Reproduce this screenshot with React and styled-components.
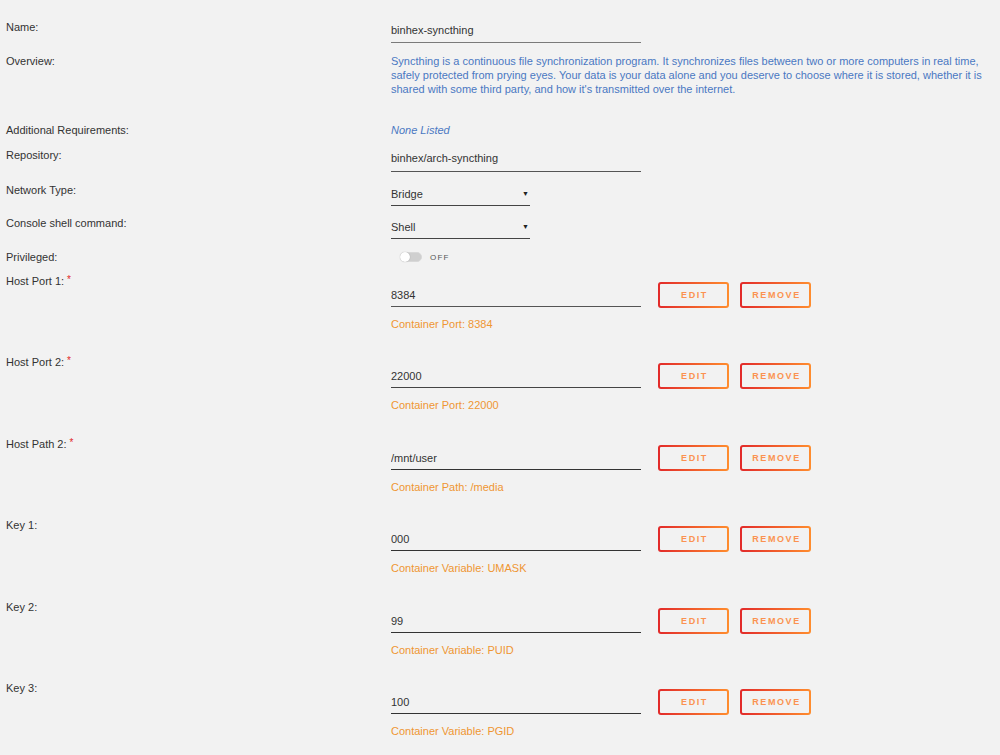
import React from 'react'
import styled, { createGlobalStyle } from 'styled-components'

const GlobalStyle = createGlobalStyle`
  html, body {
    margin: 0;
    padding: 0;
    background: #f2f2f2;
  }
  body {
    font-family: "Liberation Sans", Arial, sans-serif;
    font-size: 11px;
    color: #333;
  }
`;

const Page = styled.div`
  width: 1000px;
  height: 755px;
  overflow: hidden;
  padding: 20px 0 0 6px;
  box-sizing: border-box;
  background: #f2f2f2;
`;

const Row = styled.div`
  display: grid;
  grid-template-columns: 385px 1fr;
  align-items: start;
  margin-top: ${p => p.$gap || 0}px;
`;

const Label = styled.div`
  line-height: 14px;
  color: #333;
  white-space: nowrap;
`;

const Required = styled.span`
  color: #e22828;
  font-size: 10px;
  position: relative;
  top: -2px;
  margin-left: 3px;
`;

const TextInput = styled.input`
  display: block;
  width: 250px;
  box-sizing: border-box;
  margin: ${p => p.$offset || 0}px 0 0;
  padding: 3px 0 ${p => p.$bottom || 4}px;
  height: ${p => 18 + (p.$bottom || 4)}px;
  border: none;
  border-bottom: 1px solid ${p => p.$line || '#3a3a3a'};
  background: transparent;
  font-family: "Liberation Sans", Arial, sans-serif;
  font-size: 11px;
  line-height: 14px;
  color: #333;
  outline: none;
  border-radius: 0;
`;

const Overview = styled.p`
  margin: 0;
  width: 602px;
  line-height: 14px;
  color: #4a78c2;
`;

const Muted = styled.div`
  line-height: 14px;
  color: #4a78c2;
  font-style: italic;
`;

const Select = styled.div`
  display: flex;
  align-items: center;
  justify-content: space-between;
  width: 139px;
  box-sizing: border-box;
  padding: 4px 0 4px;
  line-height: 14px;
  border-bottom: 1px solid #444;
  color: #333;
`;

const Caret = styled.span`
  font-size: 7px;
  color: #222;
  padding-right: 1px;
`;

const ToggleWrap = styled.div`
  display: flex;
  align-items: center;
  gap: 8px;
  padding-left: 9px;
  height: 14px;
`;

const Track = styled.span`
  position: relative;
  display: block;
  width: 22px;
  height: 10px;
  box-sizing: border-box;
  border-radius: 5px;
  background: #cfcfcf;
  border: 1px solid #d8d8d8;
`;

const Knob = styled.span`
  position: absolute;
  left: -1px;
  top: -1px;
  width: 10px;
  height: 10px;
  border-radius: 50%;
  background: #fff;
  box-shadow: 0 0 1px rgba(0, 0, 0, 0.35);
`;

const ToggleText = styled.span`
  font-size: 8px;
  letter-spacing: 1.2px;
  color: #555;
`;

const PortBody = styled.div`
  padding-top: 8px;
`;

const Controls = styled.div`
  display: flex;
  align-items: flex-start;
`;

const Actions = styled.div`
  display: flex;
  gap: 11px;
  margin-left: 17px;
`;

const GradientButton = styled.button`
  width: 71px;
  height: 26px;
  box-sizing: border-box;
  border: 2px solid transparent;
  border-radius: 3px;
  background:
    linear-gradient(#f2f2f2, #f2f2f2) padding-box,
    linear-gradient(90deg, #e22a2a, #ff8d2e) border-box;
  font-family: "Liberation Sans", Arial, sans-serif;
  font-size: 9px;
  font-weight: bold;
  letter-spacing: 1.6px;
  color: #fb9251;
  padding: 0 0 0 2px;
  cursor: pointer;
`;

const Hint = styled.div`
  margin-top: 9px;
  line-height: 14px;
  color: #ef9633;
`;

const overviewText =
  "Syncthing is a continuous file synchronization program. It synchronizes files between two or more computers in real time, safely protected from prying eyes. Your data is your data alone and you deserve to choose where it is stored, whether it is shared with some third party, and how it's transmitted over the internet.";

const mappings = [
  { label: 'Host Port 1:', required: true, value: '8384', hint: 'Container Port: 8384', line: '#555' },
  { label: 'Host Port 2:', required: true, value: '22000', hint: 'Container Port: 22000', line: '#444' },
  { label: 'Host Path 2:', required: true, value: '/mnt/user', hint: 'Container Path: /media', line: '#333' },
  { label: 'Key 1:', value: '000', hint: 'Container Variable: UMASK', line: '#333' },
  { label: 'Key 2:', value: '99', hint: 'Container Variable: PUID', line: '#333' },
  { label: 'Key 3:', value: '100', hint: 'Container Variable: PGID', line: '#333' },
];

function MappingRow({ label, required, value, hint, line, gap }) {
  return (
    <Row $gap={gap}>
      <Label>
        {label}
        {required && <Required>*</Required>}
      </Label>
      <PortBody>
        <Controls>
          <TextInput defaultValue={value} $offset={3} $bottom={4} $line={line} />
          <Actions>
            <GradientButton>EDIT</GradientButton>
            <GradientButton>REMOVE</GradientButton>
          </Actions>
        </Controls>
        <Hint>{hint}</Hint>
      </PortBody>
    </Row>
  );
}

export default function App() {
  return (
    <>
      <GlobalStyle />
      <Page>
        <Row>
          <Label>Name:</Label>
          <TextInput defaultValue="binhex-syncthing" $bottom={5} $line="#7a7a7a" />
        </Row>
        <Row $gap={11}>
          <Label>Overview:</Label>
          <Overview>{overviewText}</Overview>
        </Row>
        <Row $gap={27}>
          <Label>Additional Requirements:</Label>
          <Muted>None Listed</Muted>
        </Row>
        <Row $gap={11}>
          <Label>Repository:</Label>
          <TextInput defaultValue="binhex/arch-syncthing" $bottom={6} $line="#555" />
        </Row>
        <Row $gap={11}>
          <Label>Network Type:</Label>
          <Select>
            <span>Bridge</span>
            <Caret>▼</Caret>
          </Select>
        </Row>
        <Row $gap={10}>
          <Label>Console shell command:</Label>
          <Select>
            <span>Shell</span>
            <Caret>▼</Caret>
          </Select>
        </Row>
        <Row $gap={11}>
          <Label>Privileged:</Label>
          <ToggleWrap>
            <Track>
              <Knob />
            </Track>
            <ToggleText>OFF</ToggleText>
          </ToggleWrap>
        </Row>
        {mappings.map((m, i) => (
          <MappingRow key={m.label} {...m} gap={i === 0 ? 10 : 24.4} />
        ))}
      </Page>
    </>
  );
}
